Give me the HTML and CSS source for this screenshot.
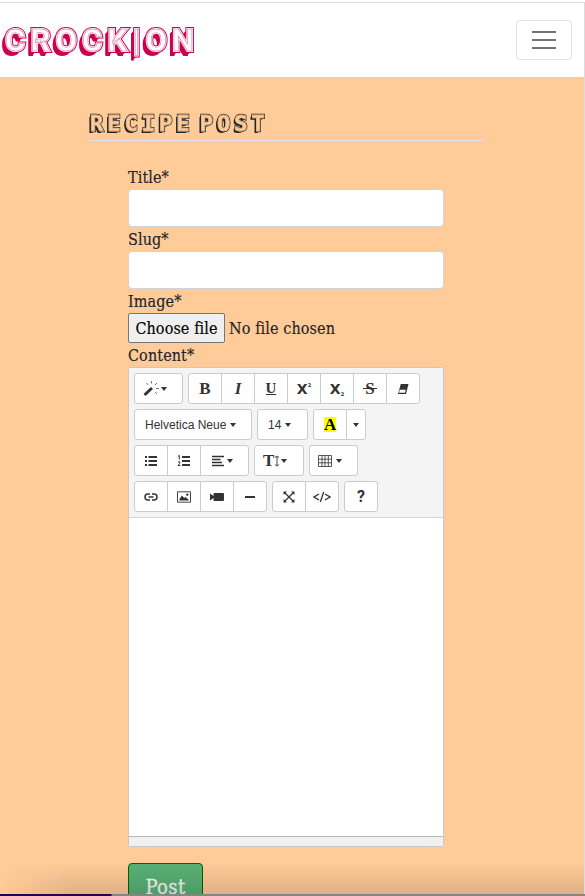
FILE: index.html
```html
<!DOCTYPE html>
<html lang="en">
<head>
<meta charset="utf-8">
<title>Recipe Post</title>
<link rel="stylesheet" href="styles.css">
</head>
<body>
<div class="window">
  <nav class="navbar">
    <a class="brand shade" data-text="CROCK|ON">CROCK|ON</a>
    <button class="toggler" aria-label="Menu"><svg width="24" height="18" viewBox="0 0 24 18"><path d="M0 1h24M0 9h24M0 17h24" stroke="#737373" stroke-width="2"/></svg></button>
  </nav>
  <main>
    <h2 class="heading"><span class="shade" data-text="RECIPE POST">RECIPE POST</span></h2>
    <form class="form">
      <label><span class="slab">Title*</span></label>
      <div class="input"></div>
      <label><span class="slab">Slug*</span></label>
      <div class="input"></div>
      <label><span class="slab">Image*</span></label>
      <div class="file"><span class="choose"><span class="slab">Choose file</span></span><span class="slab chosen">No file chosen</span></div>
      <label><span class="slab">Content*</span></label>
      <div class="editor">
        <div class="toolbar">
          <div class="row">
            <div class="group"><span class="btn menu w49"><svg width="17" height="16" viewBox="0 0 17 16"><path d="M1.500 14 9 7" stroke="#333" stroke-width="3"/><path d="M3.500 2l1.500 2M8.500 0v2.500M14 2l-2 2M13 7.500h3M12 11l2 2" stroke="#777" fill="none"/></svg><i class="caret near"></i></span></div>
            <div class="group">
              <span class="btn serif"><b>B</b></span>
              <span class="btn serif"><b><em>I</em></b></span>
              <span class="btn serif underline"><b>U</b></span>
              <span class="btn x">X<sup>2</sup></span>
              <span class="btn x">X<sub>2</sub></span>
              <span class="btn serif strike"><b>S</b></span>
              <span class="btn"><svg width="12" height="12" viewBox="0 0 12 12"><path d="M3.800 1h7.700L9 11H1z" fill="#333"/><path d="M2.700 6.800h6L8 9.800H2z" fill="#fff"/></svg></span>
            </div>
          </div>
          <div class="row">
            <div class="group"><span class="btn menu w118">Helvetica Neue<i class="caret"></i></span></div>
            <div class="group"><span class="btn menu w51">14<i class="caret"></i></span></div>
            <div class="group"><span class="btn serif"><b class="mark">A</b></span><span class="btn w20"><i class="caret only"></i></span></div>
          </div>
          <div class="row">
            <div class="group">
              <span class="btn"><svg width="14" height="12" viewBox="0 0 14 12"><path d="M1 2h2M1 6h2M1 10h2M4.500 2H13M4.500 6H13M4.500 10H13" stroke="#333" stroke-width="2"/></svg></span>
              <span class="btn"><svg width="14" height="12" viewBox="0 0 14 12"><path d="M5 2h8M5 6h8M5 10h8" stroke="#333" stroke-width="2"/><path d="M1 1.200 2.300.500V4.500M1 7.200q2-1.500 2 .1Q3 8.400 1 10.500h2.500" stroke="#333" fill="none"/></svg></span>
              <span class="btn menu w49"><svg width="14" height="12" viewBox="0 0 14 12"><path d="M1 1.500h12M1 4.500h8.500M1 7.500h10M1 10.500h12" stroke="#333" stroke-width="1.500"/></svg><i class="caret align"></i></span>
            </div>
            <div class="group"><span class="btn menu tight serif w50"><b>T</b><svg width="6" height="12" viewBox="0 0 6 12"><path d="M3 1.500v9M1 2.500l2-1.500 2 1.500M1 9.500l2 1.500 2-1.500" stroke="#333" fill="none" stroke-width=".9"/></svg><i class="caret near"></i></span></div>
            <div class="group"><span class="btn menu tight w49"><svg width="14" height="12" viewBox="0 0 14 12"><path d="M.5.5h13v11H.5zM.5 4.200h13M.5 7.800h13M4 .5v11M7 .5v11M10.300.500v11" stroke="#444" fill="none" stroke-width=".9"/></svg><i class="caret"></i></span></div>
          </div>
          <div class="row">
            <div class="group">
              <span class="btn"><svg width="14" height="8" viewBox="0 0 14 8"><path d="M6 1H4a3 3 0 0 0 0 6h2M8 1h2a3 3 0 0 1 0 6H8M4.500 4h5" stroke="#333" fill="none" stroke-width="1.500"/></svg></span>
              <span class="btn"><svg width="14" height="12" viewBox="0 0 14 12"><path d="M.5.800h13v10.400H.5z" stroke="#444" fill="none"/><path d="M2.500 9.500V8L5 4.500 7.200 7 8.500 6l3 2.500v1z" fill="#333"/><circle cx="10.300" cy="3.600" r="1.200" fill="#333"/></svg></span>
              <span class="btn"><svg width="14" height="10" viewBox="0 0 14 10"><path d="M0 1.500 3.500 4V2q0-1 1-1H13q1 0 1 1v6q0 1-1 1H4.500q-1 0-1-1V6L0 8.500z" fill="#333"/></svg></span>
              <span class="btn"><svg width="10" height="2" viewBox="0 0 10 2"><path d="M0 1h10" stroke="#333" stroke-width="2"/></svg></span>
            </div>
            <div class="group">
              <span class="btn"><svg width="12" height="12" viewBox="0 0 12 12"><path d="M1.500 1.500l9 9M10.500 1.500l-9 9" stroke="#333" stroke-width="1.300"/><path d="M.5.500H4L.5 4zM11.500.500V4L8 .5zM.5 11.500V8L4 11.500zM11.500 11.500H8L11.500 8z" fill="#333"/></svg></span>
              <span class="btn"><svg width="18" height="12" viewBox="0 0 18 12"><path d="M6 3 1 6l5 3M12 3l5 3-5 3M10.700 1 7.300 11" stroke="#333" fill="none" stroke-width="1.300"/></svg></span>
            </div>
            <div class="group"><span class="btn help">?</span></div>
          </div>
        </div>
        <div class="area"></div>
        <div class="resize"></div>
      </div>
      <button class="post" type="button"><span>Post</span></button>
    </form>
  </main>
</div>
<div class="shadow"></div>
<div class="dock"></div>
</body>
</html>
```
FILE: styles.css
```css
* { box-sizing: border-box; }
body { margin: 0; height: 896px; overflow: hidden; background: #fff; color: #212529; position: relative; padding-top: 2px; }
.window { width: 585px; height: 892px; overflow: hidden; border-top: 1px solid #dcdcdc; border-right: 1px solid #dcdcdc; background: #ffcb98; }
.navbar { height: 74px; background: #fff; display: flex; align-items: center; justify-content: space-between; padding-right: 12px; }
.toggler { width: 56px; height: 40px; padding: 0; display: flex; align-items: center; justify-content: center; background: #fff; border: 1px solid #e3e3e3; border-radius: 4px; }
.shade { position: relative; display: inline-block; white-space: pre; will-change: transform; }
.shade::before, .shade::after { content: attr(data-text); position: absolute; left: 0; top: 0; text-shadow: none; }
.brand { font: 700 31px/40px Roboto, sans-serif; letter-spacing: 5.200px; margin-left: 5px; margin-top: 1px; color: #cc0052; -webkit-text-stroke: 4px #cc0052; text-shadow: -1px 1px #cc0052, -2px 2px #cc0052, -3px 3px #cc0052, -4px 4px #cc0052, -4px 5px #cc0052; }
.brand::before { color: #fff; -webkit-text-stroke: 2px #fff; }
.brand::after { color: #fff; -webkit-text-stroke: .5px #dd6392; }
main { padding: 34px 100px 0 88px; }
.heading { margin: 0; height: 30px; border-bottom: 1px solid #dee2e6; font-size: 0; }
.heading .shade { font: 700 22px/26px "DejaVu Sans Mono", monospace; letter-spacing: 4px; word-spacing: -11px; left: 2px; top: 0; color: #212529; -webkit-text-stroke: 2.400px #212529; text-shadow: -1px 1px #212529, -2px 2px #212529; }
.heading .shade::before { color: #ffcb98; -webkit-text-stroke: 1px #ffcb98; }
.heading .shade::after { color: #ffcb98; -webkit-text-stroke: .3px #a78367; }
.form { padding: 0 40px; margin-top: 24px; }
.slab { font: 16px/24px "Roboto Slab", "DejaVu Serif Condensed", "DejaVu Serif", serif; font-stretch: condensed; white-space: nowrap; letter-spacing: .1px; -webkit-text-stroke: .15px; }
label { display: flex; height: 24px; padding-top: 1px; }
.input { height: 38px; width: 316px; border: 1px solid #ced4da; border-radius: 4px; background: #fff; }
.file { height: 30px; display: flex; align-items: center; padding-top: 0; }
.file .slab { line-height: 26px; padding-top: 1px; }
.choose { width: 97px; height: 30px; border: 1px solid #767676; border-radius: 2px; background: #efefef; color: #000; display: flex; align-items: center; justify-content: center; margin-right: 4px; }
.editor { width: 316px; border: 1px solid #c5c9cd; border-radius: 3px; background: #fff; }
.toolbar { height: 150px; padding: 5px; background: #f4f4f4; border-bottom: 1px solid #d5d5d5; display: flex; flex-direction: column; gap: 5px; }
.row { display: flex; gap: 5px; height: 31px; }
.group { display: flex; }
.btn { width: 34px; height: 31px; border: 1px solid #ccc; background: #fff; display: flex; align-items: center; justify-content: center; font: 12px "Liberation Sans", sans-serif; color: #333; white-space: nowrap; }
.btn + .btn { margin-left: -1px; }
.btn:first-child { border-radius: 3px 0 0 3px; }
.btn:last-child { border-radius: 0 3px 3px 0; }
.btn:only-child { border-radius: 3px; }
.menu { justify-content: flex-start; padding-left: 10px; }
.tight { padding-left: 8px; }
.w49 { width: 49px; } .w50 { width: 50px; } .w118 { width: 118px; } .w51 { width: 51px; } .w20 { width: 20px; }
.w49.menu:first-child:not(.tight) { padding-left: 8px; }
.caret { border: 3px solid transparent; border-top: 4px solid #333; border-bottom: 0; margin-left: 4px; margin-top: 1px; }
.only { margin-left: 0; } .near { margin-left: 1px; } .align { margin-left: 2px; }
.serif { font: 17px "Liberation Serif", serif; }
.underline b { font-size: 15px; line-height: 12px; border-bottom: 1px solid #333; }
.strike b { position: relative; }
.strike b::after { content: ""; position: absolute; left: -2px; right: -2px; top: 9px; height: 1px; background: #333; }
.x { font: 700 14px "DejaVu Sans", sans-serif; }
.x sup, .x sub { font-size: 5px; }
.x sup { margin-top: -8px; } .x sub { margin-top: 10px; }
.mark { background: #ff0; color: #000; width: 12px; height: 15px; line-height: 15px; text-align: center; }
.help { font: 700 16px Roboto, sans-serif; }
.area { height: 318px; }
.resize { height: 10px; background: #f0f0f0; border-top: 1px solid #b8b8b8; }
.post { display: block; width: 75px; height: 48px; margin-top: 16px; padding: 0; border: 1px solid #006400; border-radius: 4px; background: #59b176; color: #f4f4f4; font: 20px/46px "Roboto Slab", "DejaVu Serif Condensed", "DejaVu Serif", serif; font-stretch: condensed; -webkit-text-stroke: .3px; letter-spacing: .4px; }
.shadow { position: absolute; left: 0; bottom: 2px; width: 584px; height: 32px; background: linear-gradient(transparent, rgba(0, 0, 0, .12)); -webkit-mask-image: linear-gradient(90deg, transparent, #000 70px); mask-image: linear-gradient(90deg, transparent, #000 70px); }
.dock { height: 2px; background: linear-gradient(90deg, #21064f 111px, #858585 112px); }
```
